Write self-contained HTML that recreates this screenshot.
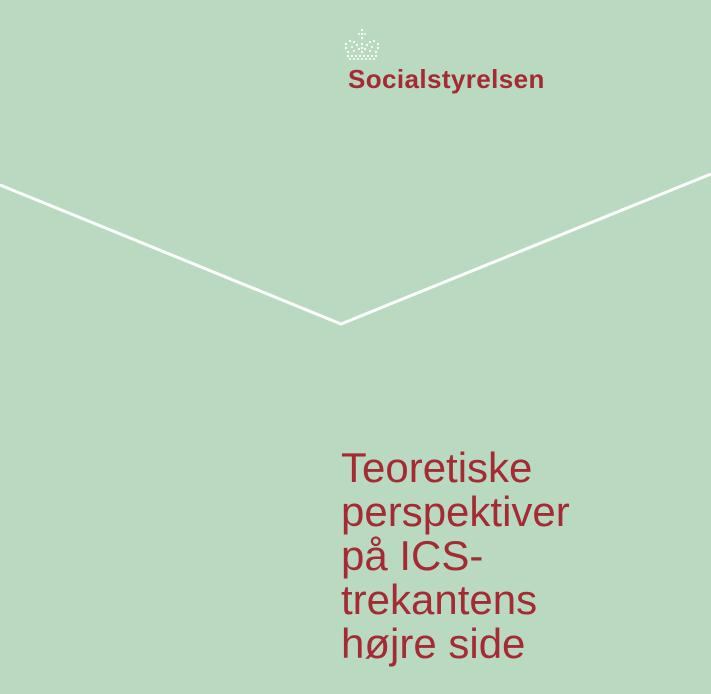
<!DOCTYPE html>
<html><head><meta charset="utf-8"><style>
html,body{margin:0;padding:0}
body{width:711px;height:694px;background:#b9dac1;position:relative;overflow:hidden;font-family:"Liberation Sans",sans-serif}
.logo{position:absolute;left:348px;top:64px;font-weight:bold;font-size:26px;color:#a42b33;letter-spacing:0.4px;line-height:30px}
.title{position:absolute;left:341px;top:446px;font-size:42px;line-height:44px;color:#a42b33}
</style></head><body>
<svg width="711" height="694" style="position:absolute;left:0;top:0">
<polyline points="0,185 341,324 711,174" fill="none" stroke="#fff" stroke-width="3"/>
<g fill="#fff">
<circle cx="362" cy="30" r="1.2"/><circle cx="362" cy="34" r="1.2"/><circle cx="359" cy="34" r="1"/><circle cx="365" cy="34" r="1"/><circle cx="362" cy="38" r="1.2"/>
<circle cx="346" cy="44" r="1.1"/><circle cx="350" cy="41" r="1.1"/><circle cx="354" cy="42" r="1.1"/><circle cx="357" cy="45" r="1.1"/><circle cx="359" cy="49" r="1.1"/>
<circle cx="378" cy="44" r="1.1"/><circle cx="374" cy="41" r="1.1"/><circle cx="370" cy="42" r="1.1"/><circle cx="367" cy="45" r="1.1"/><circle cx="365" cy="49" r="1.1"/>
<circle cx="346" cy="48" r="1.1"/><circle cx="348" cy="52" r="1.1"/><circle cx="378" cy="48" r="1.1"/><circle cx="376" cy="52" r="1.1"/>
<circle cx="362" cy="44" r="1.1"/><circle cx="362" cy="48" r="1.1"/><circle cx="362" cy="52" r="1.1"/>
<circle cx="352" cy="47" r="1"/><circle cx="372" cy="47" r="1"/><circle cx="354" cy="51" r="1"/><circle cx="370" cy="51" r="1"/>
<circle cx="348" cy="56" r="1.1"/><circle cx="352" cy="56" r="1.1"/><circle cx="356" cy="56" r="1.1"/><circle cx="360" cy="56" r="1.1"/><circle cx="364" cy="56" r="1.1"/><circle cx="368" cy="56" r="1.1"/><circle cx="372" cy="56" r="1.1"/><circle cx="376" cy="56" r="1.1"/>
<circle cx="350" cy="59" r="1"/><circle cx="354" cy="59" r="1"/><circle cx="358" cy="59" r="1"/><circle cx="362" cy="59" r="1"/><circle cx="366" cy="59" r="1"/><circle cx="370" cy="59" r="1"/><circle cx="374" cy="59" r="1"/>
</g>
</svg>
<div class="logo">Socialstyrelsen</div>
<div class="title">Teoretiske<br>perspektiver<br>på ICS-<br>trekantens<br>højre side</div>
</body></html>
